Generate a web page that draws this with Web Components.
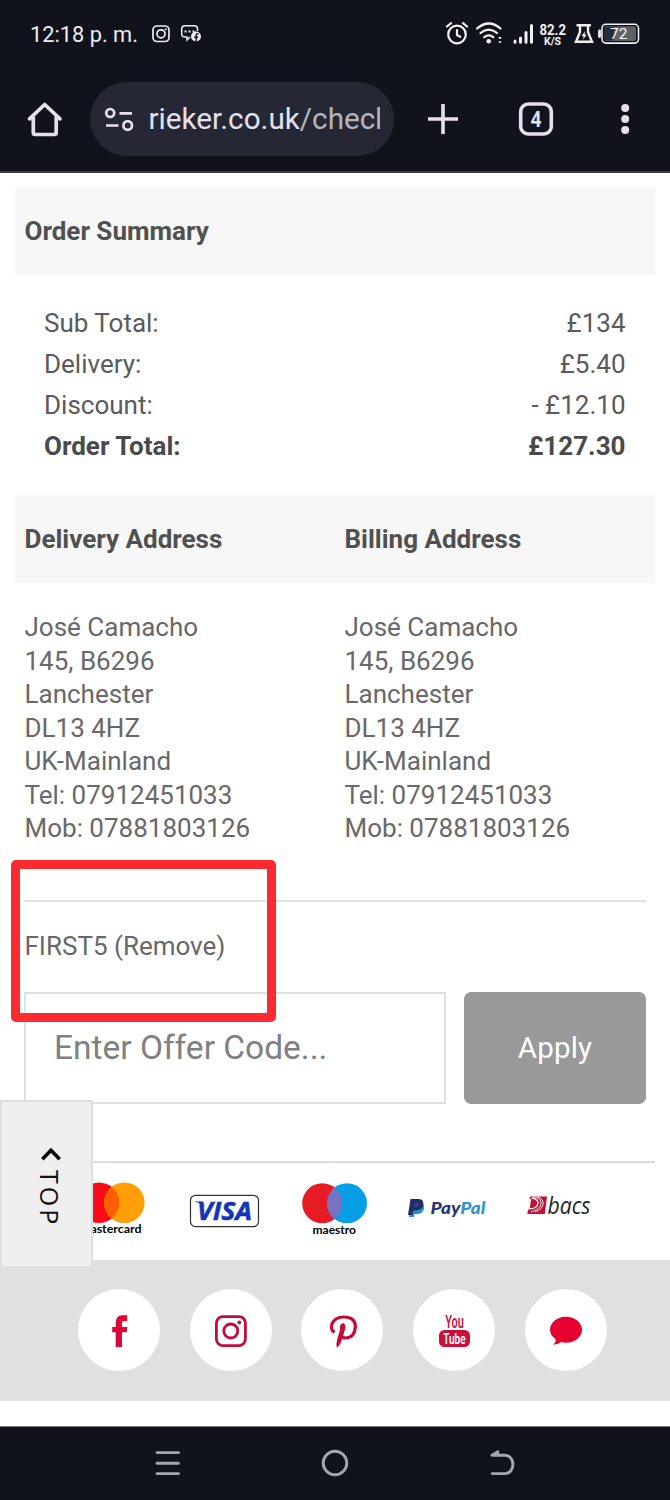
<!DOCTYPE html>
<html lang="en">
<head>
<meta charset="utf-8">
<title>Checkout</title>
<style>
html,body{margin:0;padding:0;background:#fff}
body{width:670px;height:1500px;overflow:hidden;font-family:Roboto,"Liberation Sans",sans-serif}
</style>
</head>
<body>
<checkout-screen></checkout-screen>
<script>
const define = (name, html) => {
  const template = document.createElement('template');
  template.innerHTML = html;
  customElements.define(name, class extends HTMLElement {
    constructor() {
      super();
      this.attachShadow({mode: 'open'}).append(template.content.cloneNode(true));
    }
  });
};

define('status-bar', `
<style>
:host{display:flex;height:68px;box-sizing:border-box;padding:0 30px 0 30px;align-items:center;color:#eceef2;font-size:21.800px}
.time{width:120px;white-space:nowrap}
svg{display:block}
.right{margin-left:auto}
</style>
<span class="time">12:18 p. m.</span>
<svg width="56" height="68" viewBox="150 0 56 68" fill="none" stroke="#eceef2" stroke-width="1.7">
  <rect x="153" y="26" width="16" height="15.500" rx="4"/><circle cx="161" cy="33.800" r="4"/><circle cx="165.800" cy="29.300" r="1" fill="#eceef2" stroke="none"/>
  <path d="M190 37l-3 3v-3h-2q-3.300 0-3.300-3.300V29q0-3.300 3.300-3.300h9.200q3.300 0 3.300 3.300v2" stroke-width="1.500"/>
  <path d="M184.500 31.500h2m2 0h2m2 0h2" stroke-width="2"/>
  <circle cx="196" cy="36.500" r="5" fill="#eceef2" stroke="none"/><path d="M198.500 33.700h-1q-1.300 0-1.300 1.500v6.500m-2-4.500h4" stroke="#10131b" stroke-width="1.500"/>
</svg>
<svg class="right" width="200" height="68" viewBox="440 0 200 68" fill="none" stroke="#f1f2f5" stroke-width="2.200" stroke-linecap="round">
  <circle cx="457" cy="34.500" r="8.800"/><path d="M457 30v5l3.200 1.800M447 26.500l4-3.300M463 23.200l4 3.300"/>
  <path d="M477 28.500q11.800-10 23.500 0M480.500 33q8.300-6.800 16.500 0M484.300 37.200q4.500-3.500 9 0"/><circle cx="488.700" cy="41.200" r="2.300" fill="#f1f2f5" stroke="none"/><path d="M499.300 37.800h1.200M499.300 42h1.200" stroke-width="1.700"/>
  <path d="M515 41v1.300M520.500 38v4.300M526 32.500v9.800M531.500 25.500v16.800" stroke-width="3"/>
  <g fill="#f1f2f5" stroke="none" font-family="Roboto,sans-serif" font-weight="700"><text x="539.500" y="34.800" font-size="14.500" textLength="26.500" lengthAdjust="spacingAndGlyphs">82.2</text><text x="544" y="44.500" font-size="10.500" textLength="17" lengthAdjust="spacingAndGlyphs">K/S</text></g>
  <path d="M577.500 25.200h12.500M580 26v6l-4 9.700h16l-4-9.700v-6" stroke-width="2.400"/><path d="M585 31l-3.500 5.300h2.200l-.8 3.700 3.800-5.500h-2.200z" fill="#f1f2f5" stroke="none"/>
  <path d="M599.500 31v5.500" stroke-width="2.800"/><rect x="602" y="24.300" width="36.500" height="18.800" rx="4" stroke-width="1.600"/><rect x="604" y="26.300" width="32" height="14.800" rx="2" fill="#5f6268" stroke="none"/><path d="M604 27h10v13.500h-10z" fill="#20232b" stroke="none" opacity=".85"/>
  <text x="610" y="39.200" font-family="Roboto,sans-serif" font-size="15.500" fill="#f5f5f7" stroke="none" textLength="17.500" lengthAdjust="spacingAndGlyphs">72</text>
</svg>`);

define('browser-bar', `
<style>
:host{display:flex;height:105px;box-sizing:border-box;padding:0 0 2px;border-bottom:2px solid #3b3d44;align-items:center;color:#e4e1ec}
svg{display:block;flex:none}
.address{display:flex;align-items:center;box-sizing:border-box;width:304px;margin-left:1px;height:74px;border-radius:37px;background:#252834;padding-left:14px}
.url{width:231px;margin-left:14.500px;overflow:hidden;white-space:nowrap;font-size:29.700px;line-height:46px;padding-top:1px}
.path{color:#b4b4bf}
</style>
<svg width="89" height="100" viewBox="0 69 89 100" fill="none" stroke="#e4e1ec" stroke-width="3.700" stroke-linejoin="round" stroke-linecap="round"><path d="M29.500 118.800L44.700 104.500 60 118.800M33.300 117v15.500q0 2 2 2h18.900q2 0 2-2V117"/></svg>
<div class="address">
  <svg width="30" height="30" viewBox="104 104 30 30" fill="none" stroke="#e4e1ec" stroke-width="2.700"><circle cx="110.200" cy="113" r="4"/><path d="M119.500 113.300H132M106 125.500h12.500"/><circle cx="127.700" cy="125.500" r="4.300"/></svg>
  <div class="url">rieker.co.uk<span class="path">/checkout</span></div>
</div>
<svg width="276" height="100" viewBox="394 69 276 100" fill="none" stroke="#e4e1ec" stroke-width="3.600"><path d="M428 119h30M443 104v30"/><rect x="520.700" y="104" width="30.600" height="30" rx="7.500"/><g fill="#e4e1ec" stroke="none"><circle cx="625.200" cy="108" r="4"/><circle cx="625.200" cy="119" r="4"/><circle cx="625.200" cy="130" r="4"/><text x="536" y="127" font-size="22" font-weight="700" font-family="Roboto,sans-serif" text-anchor="middle" textLength="11" lengthAdjust="spacingAndGlyphs">4</text></g></svg>`);

define('section-head', `
<style>
:host{display:grid;grid-auto-flow:column;grid-auto-columns:1fr;height:88px;align-items:center;margin:0 15px;background:#f7f7f7;color:#505050;font-size:26px;font-weight:700}
::slotted(*){padding-left:9.500px}
</style><slot></slot>`);

define('total-row', `
<style>
:host{display:flex;justify-content:space-between;align-items:center;height:41px;padding:0 44.500px 0 44px;color:#5a5a5a;font-size:26px}
:host([strong]){font-weight:700;color:#4a4a4a}
</style><slot></slot><slot name="value"></slot>`);

define('address-block', `
<style>
:host{display:block;flex:1;padding-left:9.500px;color:#686868;font-size:26px;line-height:33.500px}
::slotted(div){white-space:nowrap}
</style><slot></slot>`);

define('offer-form', `
<style>
:host{display:block;position:relative;height:261px;margin:0 24px;box-sizing:border-box;border-top:2px solid #e0e0e2}
.code{height:88px;line-height:88px;font-size:26px;color:#686868;padding-left:.5px}
.row{display:flex;gap:18px;height:112px;margin-top:2px}
.input{box-sizing:border-box;width:422px;border:2px solid #e0e0e2;padding-left:28px;font-size:33.500px;line-height:107px;color:#808080}
.apply{width:182px;border-radius:7px;background:#999;color:#fff;text-align:center;font-size:29.500px;line-height:112px;letter-spacing:.2px}
.mark{position:absolute;left:-13px;top:-42px;width:265px;height:162px;box-sizing:border-box;border:9px solid #fd2b2f;border-radius:5px}
</style>
<div class="code">FIRST5 (Remove)</div>
<div class="row"><div class="input">Enter Offer Code...</div><div class="apply">Apply</div></div>
<div class="mark"></div>`);

define('payment-logos', `
<style>
:host{display:flex;height:99px;box-sizing:border-box;margin-right:15px;padding-left:56px;border-top:2px solid #dcdcde}
svg{display:block;flex:none;width:112px;height:97px}
</style>
<svg viewBox="56 1163 112 97"><circle cx="99" cy="1202.700" r="20.300" fill="#fb0a19"/><circle cx="124.300" cy="1202.700" r="20.300" fill="#ff9e05"/><path d="M111.700 1186.800a20.300 20.300 0 0 1 0 31.800a20.300 20.300 0 0 1 0-31.800" fill="#ff5f00"/><text x="80" y="1233.300" font-family="Lato,sans-serif" font-weight="700" font-size="12" textLength="61.500" lengthAdjust="spacingAndGlyphs">mastercard</text></svg>
<svg viewBox="168 1163 112 97"><rect x="190.500" y="1195.300" width="68" height="31.300" rx="5" fill="#fff" stroke="#333" stroke-width="1.200"/><path d="M194 1201.500h8l3 5q-3-3.500-11-5z" fill="#1434b8"/><text x="197" y="1219.700" font-family="Open Sans,sans-serif" font-style="italic" font-weight="700" font-size="25.500" fill="#1434b8" stroke="#1434b8" stroke-width=".5" textLength="55" lengthAdjust="spacingAndGlyphs">VISA</text></svg>
<svg viewBox="280 1163 112 97"><circle cx="322.200" cy="1203.300" r="20" fill="#e61c24"/><circle cx="347" cy="1203.300" r="20" fill="#069fe5"/><path d="M334.600 1187.600a20 20 0 0 1 0 31.400a20 20 0 0 1 0-31.400" fill="#7673c0"/><text x="312.500" y="1233.800" font-family="Lato,sans-serif" font-weight="700" font-size="12" textLength="43.500" lengthAdjust="spacingAndGlyphs">maestro</text></svg>
<svg viewBox="392 1163 112 97"><path d="M413.500 1202h6q5.500 1 4.500 6.500t-7.500 5.500h-2l-.6 3h-5z" fill="#2191ce"/><path d="M410.500 1199h7.500q6 0 5.300 5.500t-7.800 6h-2.300l-.8 4.500h-4.400z" fill="#232b68"/><path d="M414.800 1202.800h2.700q2 .3 1.500 2.200t-3 2h-1.900z" fill="#32417f"/><text x="430.500" y="1214" font-family="Lato,sans-serif" font-style="italic" font-weight="900" font-size="16.500" textLength="55" lengthAdjust="spacingAndGlyphs" fill="#263574">Pay<tspan fill="#2e94cf">Pal</tspan></text></svg>
<svg viewBox="504 1163 112 97"><path d="M530 1196.500h17l-2.200 17.500h-17.500z" fill="#be1237"/><path d="M527.500 1210.200l1.400-10.500h1.500l-1.400 9.200q8.500-.2 9-5.600.2-4.500-6.500-5.300" fill="none" stroke="#fff" stroke-width="1.300"/><path d="M533 1196.600q8.500 1.500 8 7t-10 8.300M537.500 1196.600q6.500 2.600 5.500 7.800t-8 7.600" fill="none" stroke="#fff" stroke-width=".9"/><text x="547.500" y="1214" font-family="Open Sans,sans-serif" font-style="italic" font-size="23.500" fill="#252525" textLength="43" lengthAdjust="spacingAndGlyphs">bacs</text></svg>`);

define('top-tab', `
<style>
:host{position:absolute;left:0;top:1100px;width:93px;height:166px;box-sizing:border-box;background:#efefef;border:2px solid #dedede;border-bottom:0;display:flex;flex-direction:column;align-items:center;padding-top:44px}
svg{display:block;margin-left:8px}
span{writing-mode:vertical-rl;font:25px/30px "Open Sans",sans-serif;letter-spacing:3px;color:#111;margin-top:9px;margin-left:6px}
</style>
<svg width="20" height="15" viewBox="0 0 20 15" fill="none" stroke="#050505" stroke-width="3.500"><path d="M1.300 13.300L10 4.200l8.700 9.100"/></svg>
<span>TOP</span>`);

define('social-link', `
<style>
:host{display:flex;width:82px;height:82px;border-radius:50%;background:#fff}
::slotted(svg){display:block;width:82px;height:82px}
</style><slot></slot>`);

define('social-strip', `
<style>
:host{display:flex;height:141px;box-sizing:border-box;background:#e0e0e0;padding:29.500px 0 0 78px;gap:29.700px}
</style>
<social-link><svg viewBox="0 0 82 82"><path d="M37.700 58V43.300h-3.500v-5.300h3.500v-3.500q0-8.200 6.500-8.200h5v5.600h-3.100q-2.100 0-2.100 2.300v3.800h5.300l-.5 5.300H44V58z" fill="#dc0638"/></svg></social-link>
<social-link><svg viewBox="0 0 82 82" fill="none" stroke="#c20d3a" stroke-width="2.800"><rect x="26.400" y="27.600" width="29" height="29" rx="6.500"/><circle cx="40.800" cy="42" r="7"/><circle cx="49.300" cy="33.500" r="1.900" fill="#c20d3a" stroke="none"/></svg></social-link>
<social-link><svg viewBox="0 0 82 82"><path d="M33.500 43.500q-4.500-3-2.500-8.700Q33.500 28.500 42 28q12-.4 12.400 9.300-.5 11.500-10 11.700-3.200 0-4.500-3" fill="none" stroke="#c60a38" stroke-width="3.200"/><path d="M42.200 34q3.200 1.500 2 6l-2.700 8.500q-2 8-5.700 10.300-.9-3.300.3-8l3-10.300q-1.400-5 3.100-6.500" fill="#c60a38"/></svg></social-link>
<social-link><svg viewBox="0 0 82 82" font-family="Roboto,sans-serif"><text x="32.200" y="39" font-size="17.500" font-weight="600" fill="#ce123e" textLength="18.600" lengthAdjust="spacingAndGlyphs">You</text><rect x="26" y="41" width="31" height="17" rx="5.500" fill="#c9103a"/><text x="30.200" y="54.800" font-size="15.500" font-weight="600" fill="#fff" textLength="22.500" lengthAdjust="spacingAndGlyphs">Tube</text></svg></social-link>
<social-link><svg viewBox="0 0 82 82"><path d="M41 27.700c8.800 0 16 5.700 16 13s-7.200 13-16 13q-2.500 0-5-.6-3 2.600-8 2.700 3.200-2.300 2.500-5.700Q25 46.200 25 40.700c0-7.300 7.200-13 16-13z" fill="#e5002f"/></svg></social-link>`);

define('nav-bar', `
<style>
:host{display:block;margin-top:25px;height:74px;box-sizing:border-box;background:#10131b;border-top:1px solid #777b80}
svg{display:block}
</style>
<svg width="670" height="73" viewBox="0 1427 670 73" fill="none" stroke="#a5a7b0" stroke-width="2.900" stroke-linecap="round"><path d="M157 1452.600h21.500M157 1463.200h21.500M157 1473.600h21.500"/><circle cx="335" cy="1463" r="11.800"/><path d="M492 1455.200h12.700c11 0 11 18.400 0 18.400H492.200M492 1455.200l5.800-3.500v3.500" stroke-linejoin="round"/></svg>`);

define('checkout-screen', `
<style>
:host{display:block;position:relative;width:670px;height:1500px;background:#fff}
header{background:#10131b}
.summary{margin-top:14px}
.totals{padding:27px 0 29px}
.addresses{display:flex;box-sizing:content-box;margin:0 15px;padding:28.400px 0 28px;height:260.600px}
</style>
<header><status-bar></status-bar><browser-bar></browser-bar></header>
<section-head class="summary"><span>Order Summary</span></section-head>
<div class="totals">
  <total-row>Sub Total:<span slot="value">£134</span></total-row>
  <total-row>Delivery:<span slot="value">£5.40</span></total-row>
  <total-row>Discount:<span slot="value">- £12.10</span></total-row>
  <total-row strong>Order Total:<span slot="value">£127.30</span></total-row>
</div>
<section-head><span>Delivery Address</span><span>Billing Address</span></section-head>
<div class="addresses">
  <address-block><div>José Camacho</div><div>145, B6296</div><div>Lanchester</div><div>DL13 4HZ</div><div>UK-Mainland</div><div>Tel: 07912451033</div><div>Mob: 07881803126</div></address-block>
  <address-block><div>José Camacho</div><div>145, B6296</div><div>Lanchester</div><div>DL13 4HZ</div><div>UK-Mainland</div><div>Tel: 07912451033</div><div>Mob: 07881803126</div></address-block>
</div>
<offer-form></offer-form>
<payment-logos></payment-logos>
<social-strip></social-strip>
<nav-bar></nav-bar>
<top-tab></top-tab>`);
</script>
</body>
</html>
